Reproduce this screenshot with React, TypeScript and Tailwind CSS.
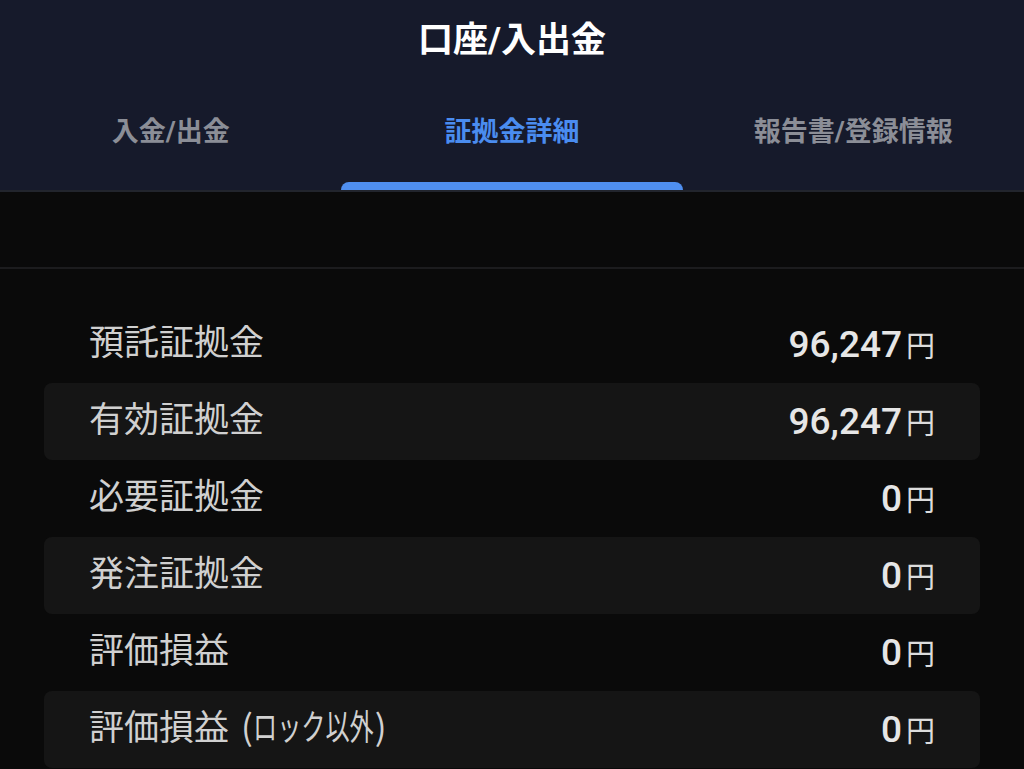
const rows = [
  { label: "預託証拠金", value: "96,247" },
  { label: "有効証拠金", value: "96,247" },
  { label: "必要証拠金", value: "0" },
  { label: "発注証拠金", value: "0" },
  { label: "評価損益", value: "0" },
  { label: "評価損益", value: "0", note: true },
];

const tabs = ["入金/出金", "証拠金詳細", "報告書/登録情報"];

export default function App() {
  return (
    <main className="min-h-screen bg-[#0a0a0a] font-['Roboto','Noto_Sans_CJK_JP',sans-serif] overflow-hidden">
      {/* Header */}
      <header className="bg-[#161a2b] border-b-2 border-[#22252d]">
        <h1 className="h-[82px] flex items-center justify-center text-[35px] font-bold text-white">
          口座/入出金
        </h1>
        <nav className="grid grid-cols-3 h-[108px]">
          {tabs.map((t, i) => (
            <div key={t} className="relative flex flex-col items-center">
              <span
                className={
                  "mt-[30px] text-[27px] font-bold " +
                  (i === 1 ? "text-[#4a8cef]" : "text-[#8b8e97]")
                }
              >
                {t}
              </span>
              {i === 1 && (
                <div className="absolute bottom-0 left-0 right-0 h-2 rounded-t-lg bg-[#4f8ff0]" />
              )}
            </div>
          ))}
        </nav>
      </header>

      {/* Spacer band */}
      <div className="h-[77px] border-b-2 border-[#1c1c1e]" />

      {/* Margin rows */}
      <section className="px-11 pt-[37px]">
        {rows.map((r, i) => (
          <div
            key={i}
            className={
              "h-[77px] flex items-center justify-between px-[45px] rounded-lg " +
              (i % 2 === 1 ? "bg-[#151515]" : "")
            }
          >
            <span className="mb-2 text-[35px] text-[#d0d0d0] font-['Noto_Sans_CJK_JP',sans-serif] whitespace-nowrap">
              {r.label}
              {r.note && (
                <span className="ml-3">
                  (
                  <span className="inline-block w-[122px] align-top whitespace-nowrap">
                    <span className="inline-block origin-left scale-x-[0.69]">ロック以外</span>
                  </span>
                  )
                </span>
              )}
            </span>
            <span className="flex items-baseline text-[#e6e6e6]">
              <span className="text-[37px] font-medium">{r.value}</span>
              <span className="ml-1 text-[29px] text-[#dcdcdc] font-['Noto_Sans_CJK_JP',sans-serif]">円</span>
            </span>
          </div>
        ))}
      </section>
    </main>
  );
}
